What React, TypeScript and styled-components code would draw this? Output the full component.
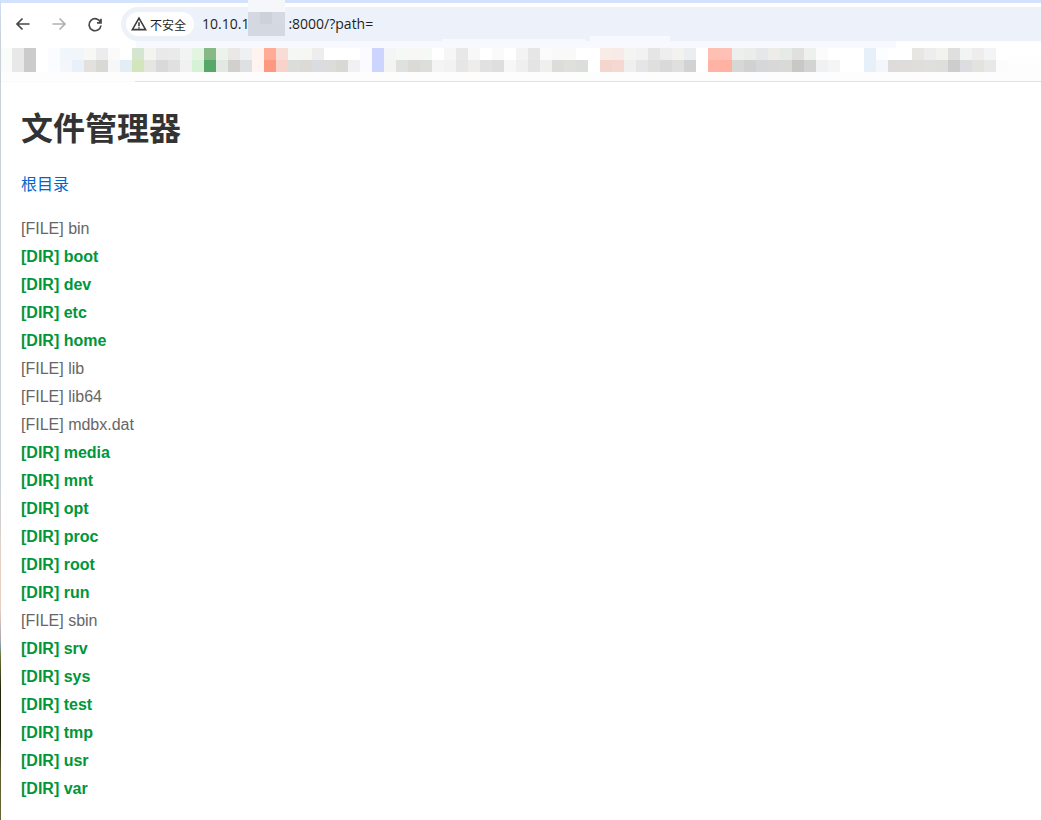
import React from 'react';
import styled, { createGlobalStyle } from 'styled-components';

interface Entry {
    name: string;
    dir?: boolean;
}

const entries: Entry[] = [
    { name: 'bin' },
    { name: 'boot', dir: true },
    { name: 'dev', dir: true },
    { name: 'etc', dir: true },
    { name: 'home', dir: true },
    { name: 'lib' },
    { name: 'lib64' },
    { name: 'mdbx.dat' },
    { name: 'media', dir: true },
    { name: 'mnt', dir: true },
    { name: 'opt', dir: true },
    { name: 'proc', dir: true },
    { name: 'root', dir: true },
    { name: 'run', dir: true },
    { name: 'sbin' },
    { name: 'srv', dir: true },
    { name: 'sys', dir: true },
    { name: 'test', dir: true },
    { name: 'tmp', dir: true },
    { name: 'usr', dir: true },
    { name: 'var', dir: true },
];

// pixelated bookmark bar, one colour per 12px block
const mosaicTop =
    'fafcfa e8e8e8 cbcbcb fff fbfcff f1f6fb f2f6fb f7f7f5 ececec fafafa fff d4e5d0 f3f3f0 e9e9e9 eaeaea f2f3f3 e2f5e0 86b985 ebf3eb e9e8e6 eff0f2 fff3f0 ffab98 f8dcd6 f5f7f4 f6f6f3 ededed fff fff fff fbfbff cdd5ff f3f5f6 f6f8f6 f7f8f6 f6f8f6 fff f6f6f6 e8e8e8 f8f8f8 fff fafafa fff f3f3f3 e6e6e6 fbfbfb f9f9f9 f9f9f9 fff fff f8ece6 f8ebe7 f4f4f2 f2f2f2 e5e5e5 eeeeee f3f2ef ebedef fff ffc0b4 ffc0b6 edeeee ecedea e5e7e9 edece9 e7ebe8 e0e0df edf0ed fbfbfb fff fff fff e6f0f8 fcfdff fff fff e8e6e3 eeeded f2f2ef e0dfdf f2f4f3 eeeded f3f4f5 fff'.split(
        ' ',
    );
const mosaicBottom =
    'fafcfa e8e8e8 cbcbcb fff fbfcff f3f7fb e8f0f9 e2e1de d9d8d5 f6f7f8 e3edf6 d3e5bb e6e5e2 d8d9da dfe0df f0f1f0 d4f3d6 57a768 e2e9e2 d2d0cd dfe0e2 fff4f0 ff9880 f8d3cc dcdcdb dbdad6 d9dce0 dcdcda d9d8d5 f0f1f2 fafaff ccd5ff f4f4f2 dfe1e0 dcdad7 dcdedc f4f4f4 f2f2f2 e6e6e6 eeedeb e0e1e0 dedede f6f7f8 efefef e4e4e4 efefed dbdddb dfdfdb dcdedb fff f4d6cc f5d8d2 f0efed e3e5e7 dfdfdd d9d9da dfdfde d1d2d3 fff ffb3a4 ffb1a2 d7d7d5 d1d1d1 d6d7d9 d8d8d8 d9dad7 c9c8c5 d1d4d2 f0f1f2 f5f5f5 fff fff e6f0f8 f3f6fb dedcda dedddb dfdedb dfe0de dededd cecdcd dcdde0 e4e2df e8e8e9 fcfcfc'.split(
        ' ',
    );

const GlobalStyle = createGlobalStyle`
    html, body {
        margin: 0;
        padding: 0;
        background: #fff;
    }
`;

const Page = styled.div`
    position: relative;
    width: 1041px;
    height: 820px;
    overflow: hidden;
    background: #fff;
    font-family: 'Liberation Sans', 'Noto Sans CJK SC', sans-serif;
`;

const WindowEdge = styled.div`
    position: absolute;
    left: 0;
    top: 0;
    bottom: 0;
    width: 1px;
    background: linear-gradient(
        to bottom,
        #cfdff5 0,
        #c9d1da 40px,
        #c9d1da 480px,
        #e6cfc2 570px,
        #e6cfc2 610px,
        #a9a9ac 640px,
        #7f99a0 647px,
        #6b7a3a 655px,
        #22240e 690px,
        #22240e 735px,
        #5e5c2e 770px,
        #6a6638 820px
    );
`;

const TopStrip = styled.div`
    height: 3px;
    background: #d3e3fd;
`;

const Toolbar = styled.div`
    display: flex;
    align-items: stretch;
    height: 38px;
    padding: 0 0 0 10px;
    margin-left: 1px;
    background: #fff;
    border-radius: 8px 0 0 0;
`;

const NavButtons = styled.div`
    display: flex;
    align-items: center;
    gap: 12px;
    padding-top: 4px;
    width: 110px;
`;

const NavIcon = styled.svg<{ $muted?: boolean }>`
    width: 24px;
    height: 24px;
    fill: none;
    stroke: ${(props) => (props.$muted ? '#b0b1b3' : '#474747')};
    stroke-width: 1.7;
`;

const Omnibox = styled.div`
    display: flex;
    align-items: center;
    flex: 1;
    height: 34px;
    margin-top: 4px;
    padding-left: 5px;
    background: #edf1fa;
    border-radius: 17px 0 0 17px;
`;

const SecurityChip = styled.div`
    display: flex;
    align-items: center;
    gap: 3px;
    height: 24px;
    padding: 0 8px 0 5px;
    background: #fff;
    border-radius: 12px;
    font-size: 12px;
    color: #1f1f1f;
`;

const WarnIcon = styled.svg`
    width: 16px;
    height: 16px;
    fill: none;
    stroke: #3c3c3c;
    stroke-width: 1.6;
`;

const Url = styled.div`
    display: flex;
    align-items: center;
    height: 100%;
    margin-left: 8px;
    padding-bottom: 1px;
    box-sizing: border-box;
    font-family: 'Open Sans', 'Liberation Sans', sans-serif;
    font-size: 14px;
    color: #1f1f1f;
`;

const UrlMask = styled.span`
    position: relative;
    align-self: stretch;
    width: 39px;
`;

const MaskBlock = styled.span`
    position: absolute;
    left: -1px;
    top: -7px;
    width: 37px;
    height: 36px;
    background: linear-gradient(to bottom, #f5f7fb 0 12px, transparent 12px),
        linear-gradient(to bottom, transparent 24px, #d4d8e0 24px),
        linear-gradient(to right, #d4d8e2 0 12px, #cdd1da 12px 24px, #d5d9e1 24px);
`;

const BookmarkBar = styled.div`
    position: relative;
    height: 41px;
    padding-top: 7px;
    box-sizing: border-box;
    background: linear-gradient(to bottom, #fff 0 7px, #fdfdfd 31px);
    border-bottom: 1px solid;
    border-image: linear-gradient(to right, #f9f9f9 136px, #e3e3e3 136px) 1;
`;

const BlueHaze = styled.div`
    position: absolute;
    left: 136px;
    top: 0;
    width: 760px;
    height: 7px;
    background: #f8f9fe;
`;

const HazeBump = styled.div<{ $left: number; $width: number; $height: number }>`
    position: absolute;
    left: ${(props) => props.$left}px;
    top: -${(props) => props.$height}px;
    width: ${(props) => props.$width}px;
    height: ${(props) => props.$height}px;
    background: #f8f9fe;
`;

const MosaicRow = styled.div`
    position: relative;
    display: flex;
    height: 12px;
`;

const Block = styled.i`
    display: block;
    flex: none;
    width: 12px;
    height: 12px;
`;

const Content = styled.main`
    padding: 20px 20px 0 21px;
`;

const Title = styled.h1`
    margin: 9px 0 0;
    font-size: 32px;
    line-height: 37px;
    font-weight: 700;
    color: #333;
`;

const RootLink = styled.a`
    display: block;
    margin-top: 28px;
    font-size: 16px;
    line-height: 18px;
    color: #06c;
    text-decoration: none;
`;

const FileList = styled.ul`
    margin: 21px 0 0;
    padding: 0;
    list-style: none;
`;

const FileRow = styled.li<{ $dir?: boolean }>`
    height: 28px;
    font-size: 16px;
    line-height: 28px;
    font-weight: ${(props) => (props.$dir ? 700 : 400)};
    color: ${(props) => (props.$dir ? '#009639' : '#666')};
`;

const App: React.FC = () => (
    <Page>
        <GlobalStyle />
        <TopStrip />
        <Toolbar>
            <NavButtons>
                <NavIcon viewBox="0 0 24 24">
                    <path d="M18.5 12H6M11.5 6.5 6 12l5.5 5.5" />
                </NavIcon>
                <NavIcon viewBox="0 0 24 24" $muted>
                    <path d="M5.5 12H18M12.5 6.5 18 12l-5.5 5.5" />
                </NavIcon>
                <NavIcon viewBox="0 0 24 24">
                    <path d="M17.6 10.4A6 6 0 1 0 18 13.5M18 6.8v4h-4" />
                </NavIcon>
            </NavButtons>
            <Omnibox>
                <SecurityChip>
                    <WarnIcon viewBox="0 0 16 16">
                        <path d="M8 2.2 14.6 13.6H1.4ZM8 6.2v4M8 11.2v1.2" />
                    </WarnIcon>
                    不安全
                </SecurityChip>
                <Url>
                    10.10.1
                    <UrlMask>
                        <MaskBlock />
                    </UrlMask>
                    :8000/?path=
                </Url>
            </Omnibox>
        </Toolbar>
        <BookmarkBar>
            <BlueHaze />
            <HazeBump $left={442} $width={143} $height={2} />
            <HazeBump $left={590} $width={80} $height={5} />
            <MosaicRow>
                {mosaicTop.map((c, i) => (
                    <Block key={i} style={{ background: `#${c}` }} />
                ))}
            </MosaicRow>
            <MosaicRow>
                {mosaicBottom.map((c, i) => (
                    <Block key={i} style={{ background: `#${c}` }} />
                ))}
            </MosaicRow>
        </BookmarkBar>
        <Content>
            <Title>文件管理器</Title>
            <RootLink href="#">根目录</RootLink>
            <FileList>
                {entries.map((entry) => (
                    <FileRow key={entry.name} $dir={entry.dir}>
                        {entry.dir ? '[DIR]' : '[FILE]'} {entry.name}
                    </FileRow>
                ))}
            </FileList>
        </Content>
        <WindowEdge />
    </Page>
);

export default App;
